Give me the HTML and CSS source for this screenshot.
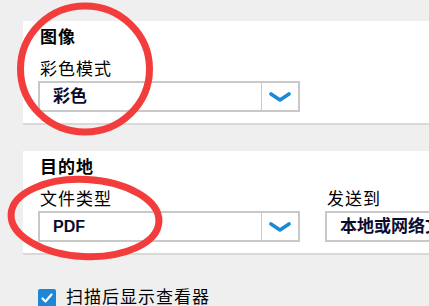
FILE: index.html
```html
<!DOCTYPE html>
<html lang="zh">
<head>
  <meta charset="UTF-8">
  <title>扫描设置</title>
  <link rel="stylesheet" href="styles.css">
</head>
<body>
  <div class="page">
    <div class="panel">
      <div class="panel-title">图像</div>
      <div class="row">
        <div class="field">
          <div class="field-label">彩色模式</div>
          <div class="select">
            <div class="select-value">彩色</div>
            <div class="select-btn">
              <svg width="22" height="10" viewBox="0 0 22 10"><polyline points="2,2 11,8 20,2" fill="none" stroke="#1a8ad6" stroke-width="3.6" stroke-linecap="round" stroke-linejoin="round"/></svg>
            </div>
          </div>
        </div>
      </div>
    </div>

    <div class="panel">
      <div class="panel-title">目的地</div>
      <div class="row">
        <div class="field">
          <div class="field-label">文件类型</div>
          <div class="select">
            <div class="select-value latin">PDF</div>
            <div class="select-btn">
              <svg width="22" height="10" viewBox="0 0 22 10"><polyline points="2,2 11,8 20,2" fill="none" stroke="#1a8ad6" stroke-width="3.6" stroke-linecap="round" stroke-linejoin="round"/></svg>
            </div>
          </div>
        </div>
        <div class="field">
          <div class="field-label">发送到</div>
          <div class="select">
            <div class="select-value">本地或网络文件夹</div>
            <div class="select-btn">
              <svg width="22" height="10" viewBox="0 0 22 10"><polyline points="2,2 11,8 20,2" fill="none" stroke="#1a8ad6" stroke-width="3.6" stroke-linecap="round" stroke-linejoin="round"/></svg>
            </div>
          </div>
        </div>
      </div>
    </div>

    <label class="check-row">
      <span class="checkbox">
        <svg width="18" height="18" viewBox="0 0 18 18"><polyline points="4.5,9.5 7.5,12.5 13.5,5.5" fill="none" stroke="#fff" stroke-width="2.2" stroke-linecap="round" stroke-linejoin="round"/></svg>
      </span>
      <span class="check-text">扫描后显示查看器</span>
    </label>

    <!-- red annotation marks drawn over the dialog -->
    <svg class="marks" width="429" height="306" viewBox="0 0 429 306">
      <ellipse cx="85" cy="69" rx="64.5" ry="63" fill="none" stroke="#f33d3d" stroke-width="7"/>
      <ellipse cx="85" cy="218" rx="74" ry="38.5" fill="none" stroke="#f33d3d" stroke-width="7" transform="rotate(3 85 218)"/>
    </svg>
  </div>
</body>
</html>
```

FILE: styles.css
```css
* {
  box-sizing: border-box;
}
body {
  margin: 0;
  background: #efefef;
  font-family: "Liberation Sans", "Noto Sans CJK SC", sans-serif;
  color: #000;
}
.page {
  position: relative;
  width: 429px;
  height: 306px;
  overflow: hidden;
  padding: 21px 0 0 23px;
}
.panel {
  width: 560px;
  background: #fff;
  border-bottom: 2px solid #d9d9d9;
  padding: 6px 0 11px 15px;
  margin-bottom: 26px;
}
.panel-title {
  font-size: 17px;
  font-weight: bold;
  line-height: 22px;
  padding-left: 2px;
  letter-spacing: 1px;
}
.row {
  display: flex;
  gap: 25px;
}
.field {
  flex: none;
  width: 262px;
}
.field-label {
  font-size: 17px;
  line-height: 22px;
  margin-top: 10px;
  padding-left: 2px;
  letter-spacing: 1px;
}
.select {
  display: flex;
  height: 31px;
  border: 2px solid #c8c8c8;
  background: #fff;
}
.select-value {
  flex: 1;
  padding-left: 13px;
  font-size: 17px;
  font-weight: bold;
  line-height: 27px;
  color: #0b0b30;
  white-space: nowrap;
  overflow: hidden;
}
.select-value.latin {
  font-size: 16px;
}
.select-btn {
  width: 37px;
  border-left: 1px solid #c8c8c8;
  display: flex;
  align-items: center;
  justify-content: center;
}
.check-row {
  display: flex;
  align-items: center;
  gap: 10px;
  margin-top: 33px;
  padding-left: 15px;
}
.checkbox {
  width: 18px;
  height: 18px;
  border-radius: 2px;
  background: #1d86d6;
  display: flex;
}
.check-text {
  font-size: 17px;
  line-height: 20px;
  letter-spacing: 1px;
}
.marks {
  position: absolute;
  top: 0;
  left: 0;
  pointer-events: none;
}
```
